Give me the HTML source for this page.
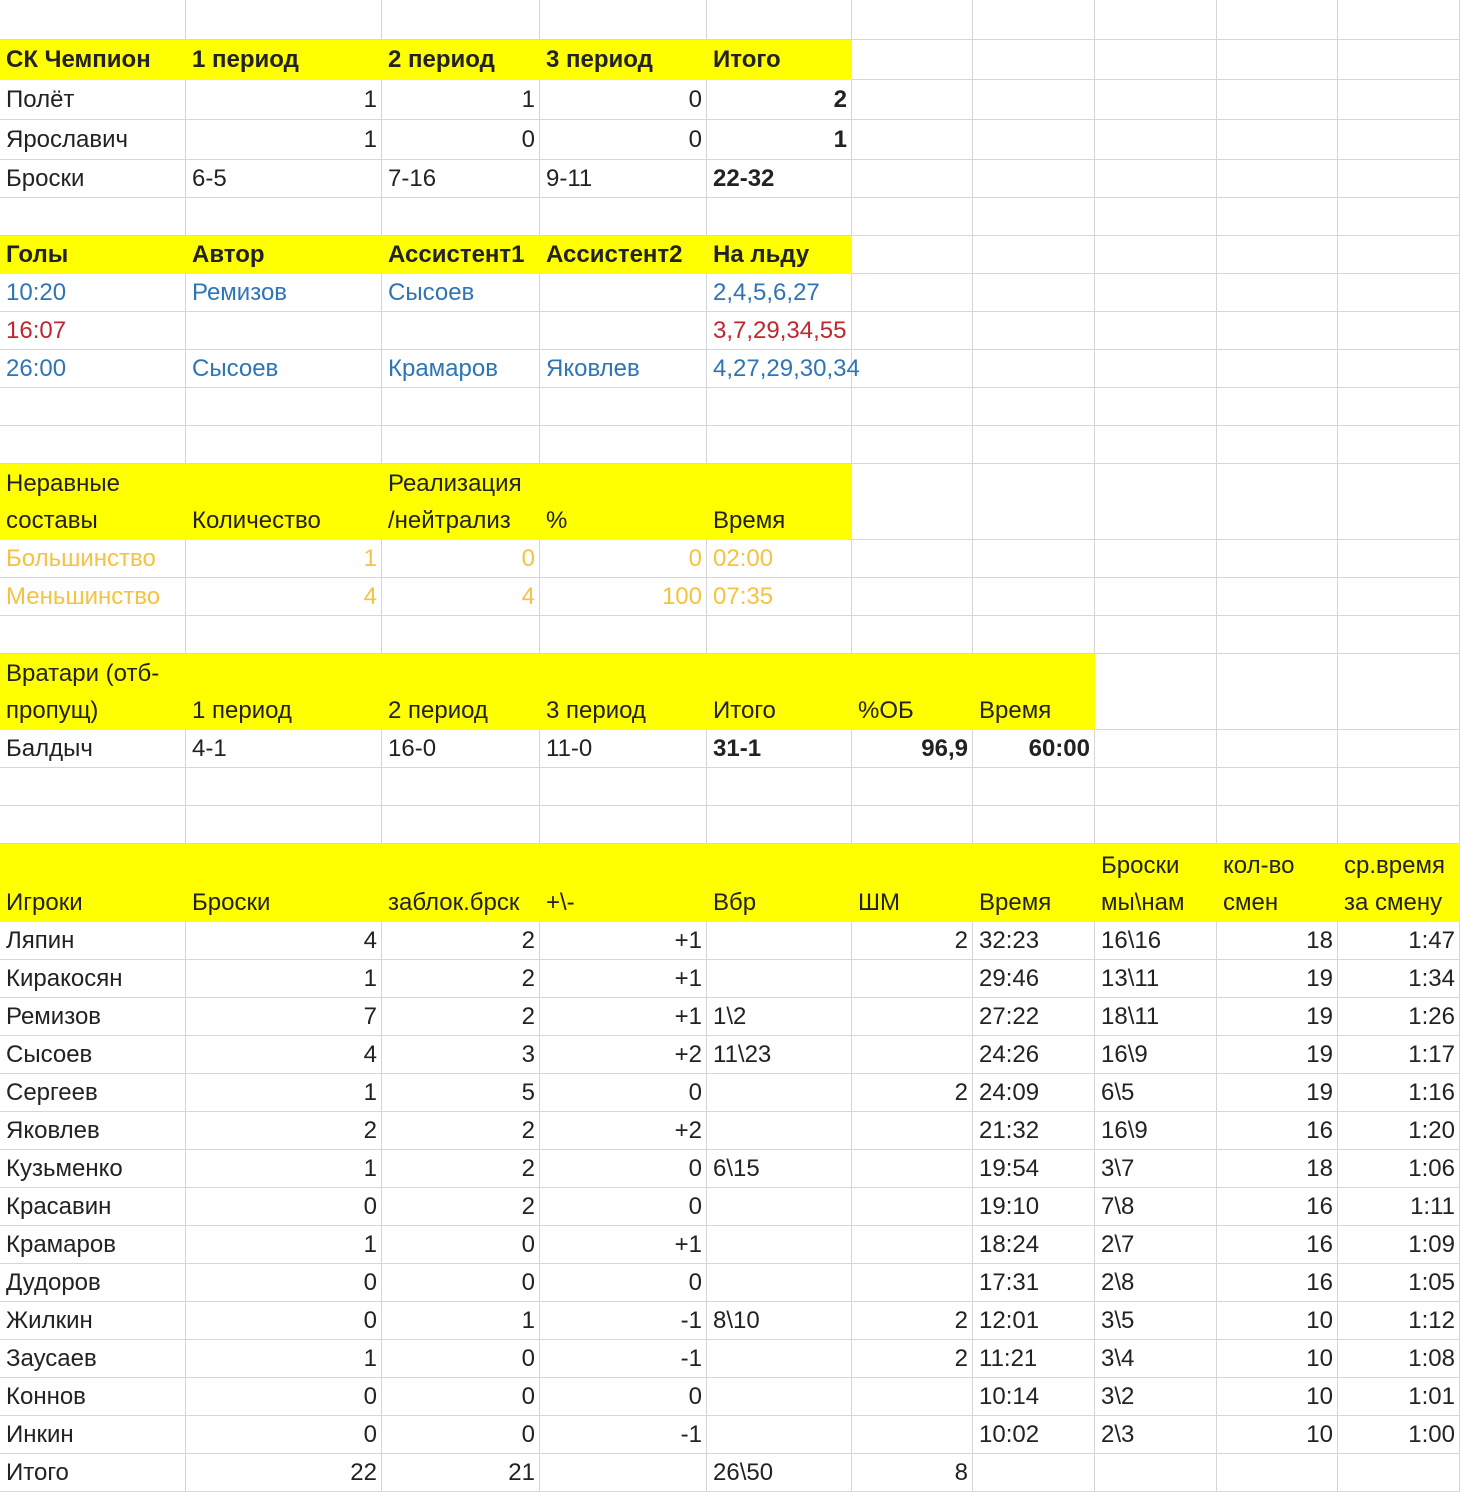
<!DOCTYPE html>
<html><head><meta charset="utf-8"><style>
html,body{margin:0;padding:0;background:#fff;}
body{width:1460px;height:1492px;overflow:hidden;}
table{border-collapse:separate;border-spacing:0;table-layout:fixed;width:1460px;font-family:"Liberation Sans",sans-serif;font-size:24px;color:#222;}
td{border-right:1px solid #d6d6d6;border-bottom:1px solid #d6d6d6;padding:0 4px 0 6px;white-space:nowrap;overflow:visible;vertical-align:bottom;line-height:37px;height:38px;box-sizing:border-box;}
td.r{text-align:right;}
.y{background:#ffff00;border-color:#ffff00;}
.b{font-weight:bold;}
.bl{color:#2e75b6;}
.rd{color:#c0272d;}
.o{color:#f5c242;}
tr.h40 td{height:40px;line-height:39px;}
tr.t td{height:76px;}
tr.t2 td{height:78px;}
</style></head><body>
<table>
<colgroup><col style="width:186px"><col style="width:196px"><col style="width:158px"><col style="width:167px"><col style="width:145px"><col style="width:121px"><col style="width:122px"><col style="width:122px"><col style="width:121px"><col style="width:122px"></colgroup>
<tr class="h40"><td></td><td></td><td></td><td></td><td></td><td></td><td></td><td></td><td></td><td></td></tr>
<tr class="h40"><td class="y b">СК Чемпион</td><td class="y b">1 период</td><td class="y b">2 период</td><td class="y b">3 период</td><td class="y b">Итого</td><td></td><td></td><td></td><td></td><td></td></tr>
<tr class="h40"><td>Полёт</td><td class="r">1</td><td class="r">1</td><td class="r">0</td><td class="r b">2</td><td></td><td></td><td></td><td></td><td></td></tr>
<tr class="h40"><td>Ярославич</td><td class="r">1</td><td class="r">0</td><td class="r">0</td><td class="r b">1</td><td></td><td></td><td></td><td></td><td></td></tr>
<tr><td>Броски</td><td>6-5</td><td>7-16</td><td>9-11</td><td class="b">22-32</td><td></td><td></td><td></td><td></td><td></td></tr>
<tr><td></td><td></td><td></td><td></td><td></td><td></td><td></td><td></td><td></td><td></td></tr>
<tr><td class="y b">Голы</td><td class="y b">Автор</td><td class="y b">Ассистент1</td><td class="y b">Ассистент2</td><td class="y b">На льду</td><td></td><td></td><td></td><td></td><td></td></tr>
<tr class="bl"><td>10:20</td><td>Ремизов</td><td>Сысоев</td><td></td><td>2,4,5,6,27</td><td></td><td></td><td></td><td></td><td></td></tr>
<tr class="rd"><td>16:07</td><td></td><td></td><td></td><td>3,7,29,34,55</td><td></td><td></td><td></td><td></td><td></td></tr>
<tr class="bl"><td>26:00</td><td>Сысоев</td><td>Крамаров</td><td>Яковлев</td><td>4,27,29,30,34</td><td></td><td></td><td></td><td></td><td></td></tr>
<tr><td></td><td></td><td></td><td></td><td></td><td></td><td></td><td></td><td></td><td></td></tr>
<tr><td></td><td></td><td></td><td></td><td></td><td></td><td></td><td></td><td></td><td></td></tr>
<tr class="t"><td class="y">Неравные<br>составы</td><td class="y">Количество</td><td class="y">Реализация<br>/нейтрализ</td><td class="y">%</td><td class="y">Время</td><td></td><td></td><td></td><td></td><td></td></tr>
<tr class="o"><td>Большинство</td><td class="r">1</td><td class="r">0</td><td class="r">0</td><td>02:00</td><td></td><td></td><td></td><td></td><td></td></tr>
<tr class="o"><td>Меньшинство</td><td class="r">4</td><td class="r">4</td><td class="r">100</td><td>07:35</td><td></td><td></td><td></td><td></td><td></td></tr>
<tr><td></td><td></td><td></td><td></td><td></td><td></td><td></td><td></td><td></td><td></td></tr>
<tr class="t"><td class="y">Вратари (отб-<br>пропущ)</td><td class="y">1 период</td><td class="y">2 период</td><td class="y">3 период</td><td class="y">Итого</td><td class="y">%ОБ</td><td class="y">Время</td><td></td><td></td><td></td></tr>
<tr><td>Балдыч</td><td>4-1</td><td>16-0</td><td>11-0</td><td class="b">31-1</td><td class="r b">96,9</td><td class="r b">60:00</td><td></td><td></td><td></td></tr>
<tr><td></td><td></td><td></td><td></td><td></td><td></td><td></td><td></td><td></td><td></td></tr>
<tr><td></td><td></td><td></td><td></td><td></td><td></td><td></td><td></td><td></td><td></td></tr>
<tr class="t2"><td class="y">Игроки</td><td class="y">Броски</td><td class="y">заблок.брск</td><td class="y">+\-</td><td class="y">Вбр</td><td class="y">ШМ</td><td class="y">Время</td><td class="y">Броски<br>мы\нам</td><td class="y">кол-во<br>смен</td><td class="y">ср.время<br>за смену</td></tr>
<tr><td>Ляпин</td><td class="r">4</td><td class="r">2</td><td class="r">+1</td><td></td><td class="r">2</td><td>32:23</td><td>16\16</td><td class="r">18</td><td class="r">1:47</td></tr>
<tr><td>Киракосян</td><td class="r">1</td><td class="r">2</td><td class="r">+1</td><td></td><td></td><td>29:46</td><td>13\11</td><td class="r">19</td><td class="r">1:34</td></tr>
<tr><td>Ремизов</td><td class="r">7</td><td class="r">2</td><td class="r">+1</td><td>1\2</td><td></td><td>27:22</td><td>18\11</td><td class="r">19</td><td class="r">1:26</td></tr>
<tr><td>Сысоев</td><td class="r">4</td><td class="r">3</td><td class="r">+2</td><td>11\23</td><td></td><td>24:26</td><td>16\9</td><td class="r">19</td><td class="r">1:17</td></tr>
<tr><td>Сергеев</td><td class="r">1</td><td class="r">5</td><td class="r">0</td><td></td><td class="r">2</td><td>24:09</td><td>6\5</td><td class="r">19</td><td class="r">1:16</td></tr>
<tr><td>Яковлев</td><td class="r">2</td><td class="r">2</td><td class="r">+2</td><td></td><td></td><td>21:32</td><td>16\9</td><td class="r">16</td><td class="r">1:20</td></tr>
<tr><td>Кузьменко</td><td class="r">1</td><td class="r">2</td><td class="r">0</td><td>6\15</td><td></td><td>19:54</td><td>3\7</td><td class="r">18</td><td class="r">1:06</td></tr>
<tr><td>Красавин</td><td class="r">0</td><td class="r">2</td><td class="r">0</td><td></td><td></td><td>19:10</td><td>7\8</td><td class="r">16</td><td class="r">1:11</td></tr>
<tr><td>Крамаров</td><td class="r">1</td><td class="r">0</td><td class="r">+1</td><td></td><td></td><td>18:24</td><td>2\7</td><td class="r">16</td><td class="r">1:09</td></tr>
<tr><td>Дудоров</td><td class="r">0</td><td class="r">0</td><td class="r">0</td><td></td><td></td><td>17:31</td><td>2\8</td><td class="r">16</td><td class="r">1:05</td></tr>
<tr><td>Жилкин</td><td class="r">0</td><td class="r">1</td><td class="r">-1</td><td>8\10</td><td class="r">2</td><td>12:01</td><td>3\5</td><td class="r">10</td><td class="r">1:12</td></tr>
<tr><td>Заусаев</td><td class="r">1</td><td class="r">0</td><td class="r">-1</td><td></td><td class="r">2</td><td>11:21</td><td>3\4</td><td class="r">10</td><td class="r">1:08</td></tr>
<tr><td>Коннов</td><td class="r">0</td><td class="r">0</td><td class="r">0</td><td></td><td></td><td>10:14</td><td>3\2</td><td class="r">10</td><td class="r">1:01</td></tr>
<tr><td>Инкин</td><td class="r">0</td><td class="r">0</td><td class="r">-1</td><td></td><td></td><td>10:02</td><td>2\3</td><td class="r">10</td><td class="r">1:00</td></tr>
<tr><td>Итого</td><td class="r">22</td><td class="r">21</td><td></td><td>26\50</td><td class="r">8</td><td></td><td></td><td></td><td></td></tr>
</table>
</body></html>
